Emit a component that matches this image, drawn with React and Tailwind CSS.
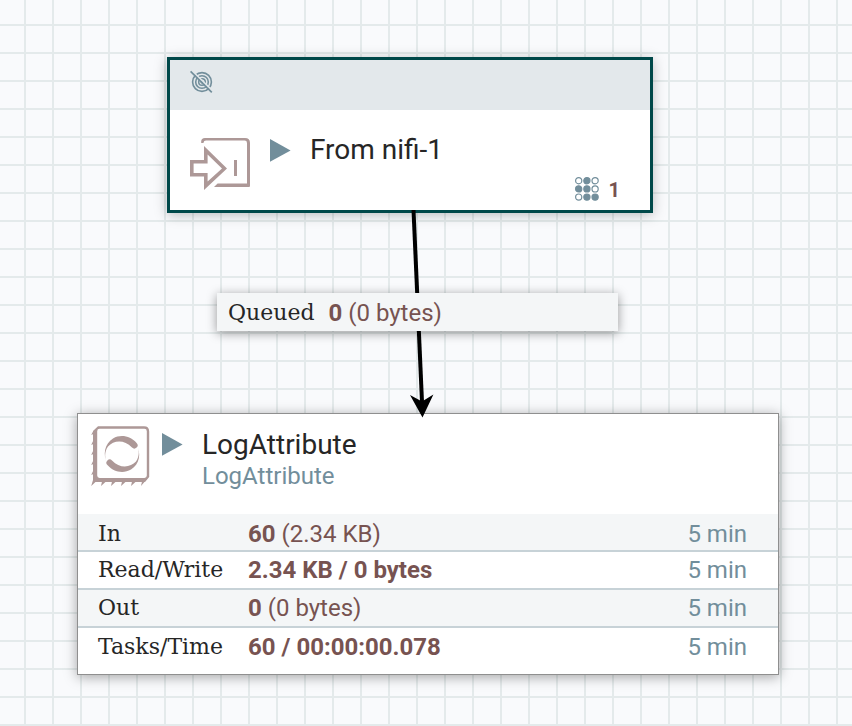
const STATS = [
  { label: 'In', strong: '60', rest: ' (2.34 KB)', period: '5 min' },
  { label: 'Read/Write', strong: '2.34 KB / 0 bytes', rest: '', period: '5 min' },
  { label: 'Out', strong: '0', rest: ' (0 bytes)', period: '5 min' },
  { label: 'Tasks/Time', strong: '60 / 00:00:00.078', rest: '', period: '5 min' },
];

function TransmissionOffIcon() {
  return (
    <svg className="size-6" viewBox="0 0 24 24" fill="none" stroke="#728e9b" aria-hidden="true">
      <circle cx="12" cy="12" r="9.4" strokeWidth="1.6" />
      <circle cx="12" cy="12" r="6.3" strokeWidth="1.6" />
      <circle cx="12" cy="12" r="3.3" strokeWidth="1.5" />
      <circle cx="12" cy="12" r="1.5" fill="#728e9b" stroke="none" />
      <path d="M1.5 0.3L23.3 21.3" stroke="#e3e8eb" strokeWidth="1.6" />
      <path d="M0.6 1.3L21.8 22.3" strokeWidth="1.7" />
    </svg>
  );
}

function InputPortIcon() {
  return (
    <svg className="h-[52px] w-[60px] shrink-0" viewBox="0 0 60 52" fill="#ad9897" aria-hidden="true">
      <path
        fillRule="evenodd"
        d="M0 22H14V8L37 30.5L14 52V38.5H0ZM3.6 25.6V35H17.6V43.6L32 30.5L17.6 16.4V25.6Z"
      />
      <path d="M11.2 5V3.5Q11.2 0 15 0H55Q60 0 60 5V48Q60 49 59 49H24L27.6 45.6H57V5Q57 2.6 54.6 2.6H16Q13.8 2.6 13.4 5Z" />
      <rect x="44" y="22" width="3" height="16" />
    </svg>
  );
}

function ProcessorIcon() {
  return (
    <svg className="size-[60px] shrink-0" viewBox="0 0 60 60" fill="#ad9897" aria-hidden="true">
      <path
        fillRule="evenodd"
        d="M7 0.3H53Q58.2 0.3 58.2 5.5V51L54 56H2V5ZM8.6 2.8Q6.2 2.8 6.2 5.2V49.6Q6.2 52 8.6 52H53.4Q55.8 52 55.8 49.6V5.2Q55.8 2.8 53.4 2.8Z"
      />
      <path d="M2.5 4.5L0.2 9L2.5 8ZM2.5 14L0.2 19L2.5 18ZM2.5 24L0.2 29L2.5 28ZM2.5 34L0.2 39L2.5 38ZM2.5 44L0.2 49L2.5 48ZM2 54L0.2 60L5 55.5ZM11 55.5L10 60L15 55.5ZM21 55.5L20 60L25 55.5ZM31 55.5L30 60L35 55.5ZM41 55.5L40 60L45 55.5ZM51 55.5L50 60L56 53Z" />
      <path d="M16.5 38.5C11.5 28 13.5 18 22 12.4C30 8 39.5 10 45.6 17A3.1 3.1 0 0 1 41 21.6C33 13 22.5 14.5 17 20.5C13.2 26 13.5 32.5 16.5 38.5Z" />
      <path
        transform="rotate(180 31 28)"
        d="M16.5 38.5C11.5 28 13.5 18 22 12.4C30 8 39.5 10 45.6 17A3.1 3.1 0 0 1 41 21.6C33 13 22.5 14.5 17 20.5C13.2 26 13.5 32.5 16.5 38.5Z"
      />
    </svg>
  );
}

function RunningIcon() {
  return (
    <svg className="h-[23px] w-5 shrink-0 overflow-visible" viewBox="0 0 20 23" fill="#728e9b" aria-hidden="true">
      <path d="M0 0L20.6 11.4L0 22.8Z" />
    </svg>
  );
}

function ThreadsIcon() {
  const dots = [
    [0, 1, 0],
    [1, 1, 0],
    [0, 1, 1],
  ];
  return (
    <svg className="size-6" viewBox="0 0 24 24" stroke="#728e9b" strokeWidth="1.2" aria-hidden="true">
      {dots.map((row, y) =>
        row.map((on, x) => (
          <circle key={`${x}-${y}`} cx={3.7 + x * 8.2} cy={3.7 + y * 8.2} r="3.1" fill={on ? '#728e9b' : 'none'} />
        ))
      )}
    </svg>
  );
}

function PortNode() {
  return (
    <section className="absolute top-[57px] left-[167px] w-[486px] border-3 border-[#004849] bg-white shadow-[0_2px_12px_rgba(0,0,0,0.25)]">
      <header className="flex h-[50px] items-start bg-[#e3e8eb] px-5 pt-2.5">
        <TransmissionOffIcon />
      </header>
      <div className="flex h-[100px] items-start px-5 pt-7">
        <InputPortIcon />
        <div className="flex flex-1 flex-col">
          <div className="flex h-6 items-center gap-5 pl-5">
            <RunningIcon />
            <h2 className="text-[28px] leading-8 text-[#262626]">From nifi-1</h2>
          </div>
          <div className="mt-3 flex items-center justify-end gap-2.5 pr-2.5">
            <ThreadsIcon />
            <span className="pt-0.5 text-xl leading-7 font-bold text-[#775351]">1</span>
          </div>
        </div>
      </div>
    </section>
  );
}

function ProcessorNode() {
  return (
    <section className="absolute top-[413px] left-[77px] w-[702px] border border-[#8f8f8f] bg-white pb-2 shadow-[0_2px_12px_rgba(0,0,0,0.35)]">
      <header className="flex h-[100px] items-start pt-3 pl-[13px]">
        <ProcessorIcon />
        <div className="flex gap-5 pt-[7px] pl-[11px]">
          <RunningIcon />
          <div className="-mt-1">
            <h2 className="text-[28px] leading-8 text-[#262626]">LogAttribute</h2>
            <p className="text-2xl leading-[30px] text-[#728e9b]">LogAttribute</p>
          </div>
        </div>
      </header>
      <table className="w-full table-fixed border-separate border-spacing-0 text-2xl leading-8">
        <tbody>
          {STATS.map((row) => (
            <tr
              key={row.label}
              className="h-[38px] odd:bg-[#f4f6f7] first:*:pt-1 not-last:*:border-b-2 *:border-[#c7d2d7]"
            >
              <th
                scope="row"
                className="w-[170px] p-0 pl-5 text-left font-['DejaVu_Serif',serif] text-[22px] font-normal whitespace-nowrap text-[#262626]"
              >
                {row.label}
              </th>
              <td className="p-0 text-[#775351]">
                <b>{row.strong}</b>
                {row.rest}
              </td>
              <td className="w-[120px] p-0 pr-[31px] text-right text-[#728e9b]">{row.period}</td>
            </tr>
          ))}
        </tbody>
      </table>
    </section>
  );
}

function Connection() {
  return (
    <>
      <svg className="pointer-events-none absolute inset-0 h-full w-full" aria-hidden="true">
        <path d="M413.5 210L422 402" stroke="#000" strokeWidth="4" fill="none" />
        <path d="M410 395L422 401.5L433.4 394.5L422.5 417.5Z" />
      </svg>
      <div className="absolute top-[293px] left-[217px] flex h-[38px] w-[401px] items-center gap-3.5 bg-[#f4f6f7] pt-0.5 pl-[11px] text-2xl shadow-[0_2px_10px_rgba(0,0,0,0.4)]">
        <span className="font-['DejaVu_Serif',serif] text-[22px]  text-[#262626]">Queued</span>
        <span className="text-[#775351]">
          <b>0</b> (0 bytes)
        </span>
      </div>
    </>
  );
}

export default function App() {
  return (
    <main className="relative min-h-screen overflow-hidden bg-[#f9fafc] bg-[linear-gradient(to_right,#e4eaeb_2px,transparent_2px),linear-gradient(to_bottom,#e4eaeb_2px,transparent_2px)] bg-[length:28px_28px] bg-[position:24px_24px] font-[Roboto,sans-serif]">
      <PortNode />
      <ProcessorNode />
      <Connection />
    </main>
  );
}
